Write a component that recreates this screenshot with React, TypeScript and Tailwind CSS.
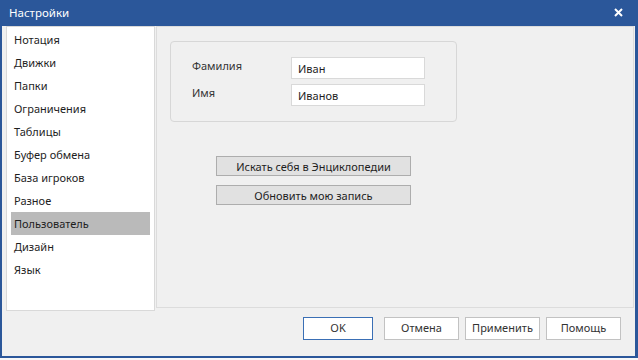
import { useState } from 'react'

const SECTIONS = [
  'Нотация',
  'Движки',
  'Папки',
  'Ограничения',
  'Таблицы',
  'Буфер обмена',
  'База игроков',
  'Разное',
  'Пользователь',
  'Дизайн',
  'Язык',
]

export default function App() {
  const [active, setActive] = useState('Пользователь')
  const [surname, setSurname] = useState('Иван')
  const [name, setName] = useState('Иванов')

  return (
    <div className="w-[638px] h-[360px] bg-[#f7f7f7] overflow-hidden font-['Noto_Sans',sans-serif] text-[11px] text-[#1e1e1e]">
      {/* Window */}
      <div className="h-[358px] flex flex-col bg-[#f0f0f0] border-l-2 border-r-[3px] border-b-2 border-[#2b579a]">
        {/* Title bar */}
        <div className="h-[26px] shrink-0 bg-[#2b579a] flex items-center justify-between pl-[7px] pr-[12px] text-white">
          <span className="text-[11.5px] leading-none">Настройки</span>
          <svg width="9" height="9" viewBox="0 0 9 9" className="mt-[-2px]">
            <path d="M1 1 L8 8 M8 1 L1 8" stroke="white" strokeWidth="2" />
          </svg>
        </div>

        {/* Body */}
        <div className="flex gap-[1px] pl-[4px] pr-[1px] h-[285px] shrink-0">
          {/* Section list */}
          <div className="w-[149px] bg-white border border-[#d9d9d9] pt-[1px] px-[4px]">
            {SECTIONS.map(s => (
              <div
                key={s}
                onClick={() => setActive(s)}
                className={`h-[23px] flex items-center pl-[3px] pt-[1px] cursor-default ${
                  active === s ? 'bg-[#bababa]' : ''
                }`}
              >
                {s}
              </div>
            ))}
          </div>

          {/* Page */}
          <div className="flex-1 h-[282px] border border-[#dcdcdc] pl-[13px] pt-[14px]">
            <div className="w-[287px] h-[81px] border border-[#d7d7d7] rounded-[4px] pl-[21px] pt-[15px] flex flex-col gap-[5px]">
              <div className="flex items-start">
                <span className="w-[99px] pt-[1px] text-[#333]">Фамилия</span>
                <input
                  value={surname}
                  onChange={e => setSurname(e.target.value)}
                  className="w-[134px] h-[22px] bg-white border border-[#d9d9d9] px-[6px] outline-none text-[11px] text-[#1e1e1e]"
                />
              </div>
              <div className="flex items-start">
                <span className="w-[99px] pt-[1px] text-[#333]">Имя</span>
                <input
                  value={name}
                  onChange={e => setName(e.target.value)}
                  className="w-[134px] h-[22px] bg-white border border-[#d9d9d9] px-[6px] outline-none text-[11px] text-[#1e1e1e]"
                />
              </div>
            </div>

            <div className="ml-[46px] mt-[34px] flex flex-col gap-[9px]">
              <button className="w-[195px] h-[20px] bg-[#e1e1e1] border border-[#adadad] leading-none">
                Искать себя в Энциклопедии
              </button>
              <button className="w-[195px] h-[20px] bg-[#e1e1e1] border border-[#adadad] leading-none">
                Обновить мою запись
              </button>
            </div>
          </div>
        </div>

        {/* Footer */}
        <div className="flex justify-end pr-[14px] pt-[6px] text-[#333]">
          <button className="w-[70px] h-[23px] bg-white border border-[#3a6fb5] mr-[11px]">OK</button>
          <button className="w-[75px] h-[23px] bg-white border border-[#c2c2c2] mr-[6px]">Отмена</button>
          <button className="w-[75px] h-[23px] bg-white border border-[#c2c2c2] mr-[6px]">Применить</button>
          <button className="w-[75px] h-[23px] bg-white border border-[#c2c2c2]">Помощь</button>
        </div>
      </div>
    </div>
  )
}
